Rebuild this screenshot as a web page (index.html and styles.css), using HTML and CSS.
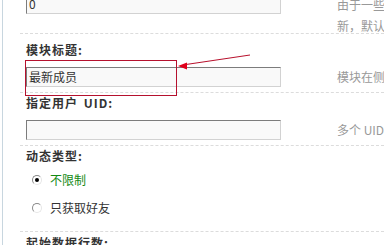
FILE: index.html
```html
<!DOCTYPE html>
<html lang="zh-CN">
<head>
<meta charset="utf-8">
<title>模块设置</title>
<link rel="stylesheet" href="styles.css">
</head>
<body>
<div class="frame">
  <div class="row-input row-first">
    <div class="cell-input"><div class="txt">0</div></div>
    <div class="tips tips-two">由于一些模块数据需要实时更<br>新，默认为 0 即不缓存</div>
  </div>
  <div class="row-label sep pad-first"><span class="lbl">模块标题:</span></div>
  <div class="row-input">
    <div class="cell-input"><div class="txt">最新成员</div></div>
    <div class="tips">模块在侧边栏显示的标题</div>
  </div>
  <div class="row-label sep pad-b"><span class="lbl">指定用户 UID:</span></div>
  <div class="row-input">
    <div class="cell-input"><div class="txt"></div></div>
    <div class="tips">多个 UID 请用半角逗号隔开</div>
  </div>
  <div class="row-label sep pad-c"><span class="lbl">动态类型:</span></div>
  <div class="radios">
    <div class="radio-row"><span class="radio checked"></span><span class="rlabel on">不限制</span></div>
    <div class="radio-row"><span class="radio"></span><span class="rlabel">只获取好友</span></div>
  </div>
  <div class="row-label sep pad-d"><span class="lbl">起始数据行数:</span></div>
</div>
<svg class="annot" width="384" height="245" viewBox="0 0 384 245" aria-hidden="true">
  <rect x="25.5" y="60.5" width="151" height="35" fill="none" stroke="#b5112e" stroke-width="1"/>
  <line x1="186" y1="64.5" x2="250" y2="55" stroke="#b8102c" stroke-width="1"/>
  <polygon points="178,66 187,62.5 187,69.5" fill="#e0001b"/>
</svg>
</body>
</html>
```
FILE: styles.css
```css
html, body {
  margin: 0;
  padding: 0;
  overflow: hidden;
  background: #fff;
}
body {
  position: relative;
  width: 384px;
  height: 245px;
  font-family: "Noto Sans CJK SC", "DejaVu Sans", sans-serif;
  font-size: 12px;
  color: #333;
}
.frame {
  margin-left: 2px;
  border-left: 1px solid #c8d6df;
  padding-left: 17px;
  min-height: 260px;
}
.row-input {
  display: grid;
  grid-template-columns: 317px 400px;
  height: 25px;
}
.row-first {
  margin-top: -6px;
  height: 39px;
}
.cell-input {
  padding-left: 6px;
}
.txt {
  box-sizing: border-box;
  width: 255px;
  height: 20px;
  border: 1px solid;
  border-color: #7c7c7c #d2d2d2 #d2d2d2 #7c7c7c;
  background: #f9f9f9;
  padding: 0 2px;
  line-height: 18px;
  font-size: 12px;
  color: #333;
}
.tips {
  color: #999;
  line-height: 20px;
  white-space: nowrap;
}
.tips-two {
  line-height: 21px;
}
.sep {
  border-top: 1px dashed #dcdcdc;
}
.row-label {
  padding-left: 6px;
}
.lbl {
  display: block;
  font-weight: bold;
  line-height: 16px;
  letter-spacing: 1px;
  word-spacing: 2px;
  color: #333;
}
.pad-first { padding-top: 8px; padding-bottom: 9px; }
.pad-b { padding-top: 2px; padding-bottom: 9px; }
.pad-c { padding-top: 2px; padding-bottom: 2px; }
.pad-d { padding-top: 3px; }
.radios {
  padding-bottom: 9px;
}
.radio-row {
  display: flex;
  align-items: center;
  height: 28px;
  padding-left: 12px;
}
.radio {
  box-sizing: border-box;
  width: 10px;
  height: 10px;
  border-radius: 50%;
  border: 1px solid;
  border-color: #8a8a8a #e6e6e6 #e6e6e6 #8a8a8a;
  background: #fff;
  display: flex;
  align-items: center;
  justify-content: center;
}
.radio.checked::after {
  content: "";
  width: 4px;
  height: 4px;
  border-radius: 50%;
  background: #000;
}
.rlabel {
  margin-left: 8px;
  line-height: 16px;
  color: #333;
}
.rlabel.on {
  color: #138a13;
}
.annot {
  position: absolute;
  left: 0;
  top: 0;
  pointer-events: none;
}
```
